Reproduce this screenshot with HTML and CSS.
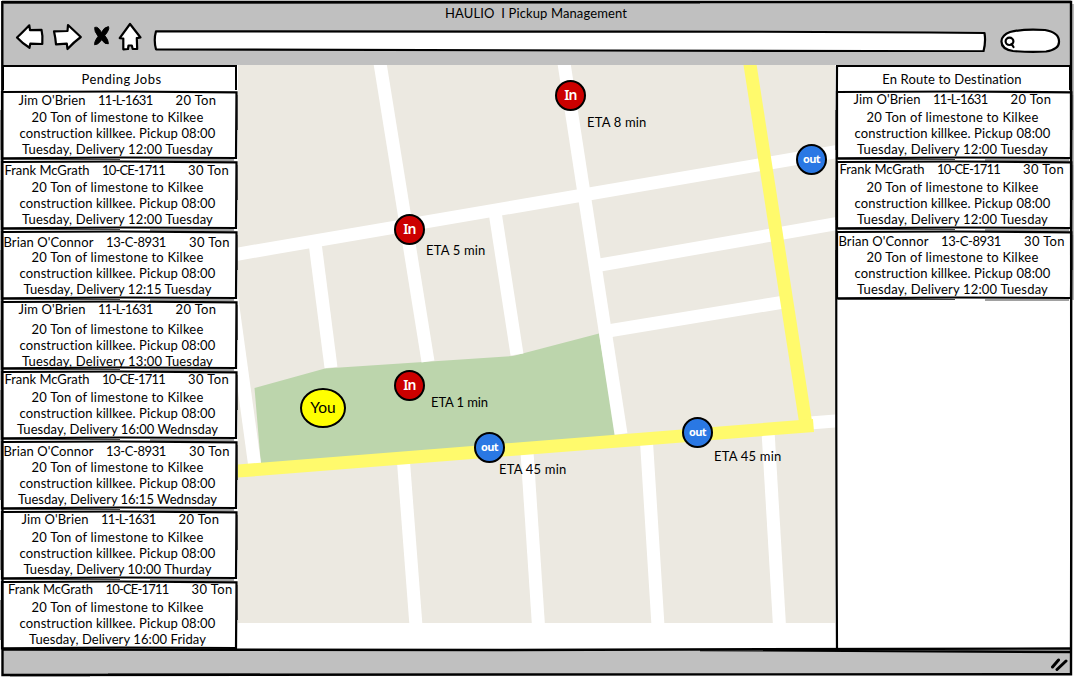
FILE: index.html
```html
<!DOCTYPE html>
<html lang="en">
<head>
<meta charset="utf-8">
<title>HAULIO | Pickup Management</title>
<link rel="stylesheet" href="styles.css">
</head>
<body>
<div class="window">
  <header class="chrome">
    <div class="title"><span data-w="182">HAULIO&nbsp; I Pickup Management</span></div>
    <div class="toolbar">
      <svg class="tool back" width="30" height="30" viewBox="15 22 30 30"><path d="M17 37.5 Q22 33 29.3 25.3 L30 30.2 L41.5 29.8 Q43 36 42.3 44 L30.3 43.6 L29.5 47.8 Q22 43 17 37.5Z"/></svg>
      <svg class="tool forward" width="32" height="30" viewBox="51 22 32 30"><path d="M54 31.3 L67.5 31 L68 25 L80.8 37 Q74 42 67.5 49 L66.8 43.6 L56 44.4 Q55.5 38 54 31.3Z"/></svg>
      <svg class="tool stop" width="20" height="30" viewBox="92 22 20 30"><path class="ink" d="M94.7 27.4 Q98 26 101.500 32.500 Q104 27 108.500 26.600 Q110 29.500 104.800 35.500 Q108.600 40 108.400 43.800 Q105 44.800 101.700 39.800 Q98 45.200 94.600 44.800 Q94 42 98.100 36.300 Q94 31 94.700 27.400Z"/></svg>
      <svg class="tool home" width="26" height="30" viewBox="117 22 26 30"><path d="M130 24 L140.500 37.500 L136.800 38.200 L137.200 49 L132.700 49 L131.800 45.500 L128.500 45.500 L128 49 L123.300 49.300 L123.300 38.500 L119.700 38.200Z"/></svg>
      <svg class="tool url" width="836" height="30" viewBox="152 22 836 30"><path d="M156 31.300 Q400 31.800 600 31.600 T984.500 33 Q986 42 983.500 51.300 Q800 50.500 600 50.500 T156 49.300 Q153.500 40 156 31.300Z"/></svg>
      <svg class="tool search" width="62" height="30" viewBox="999 25 62 30"><path d="M1010 32 Q1024 28.500 1045 30 Q1059.500 32.500 1059 42 Q1059 49.500 1046 51.500 Q1030 52.500 1013 51 Q1001 49 1001.500 41 Q1002 35 1010 32Z"/><ellipse class="lens" cx="1009.500" cy="41.300" rx="3.900" ry="3.700"/><path class="lens" d="M1011.500 44 L1013.500 47"/></svg>
    </div>
  </header>

  <main class="main">
    <section class="column">
      <h2 class="column-head"><span data-w="80">Pending Jobs</span></h2>
      <div class="jobs" id="pending"></div>
    </section>

    <section class="map">
      <svg class="streets" width="597" height="558" viewBox="238 65 597 558">
        <path class="park" d="M254.500 388 L325 368.500 L513 356 L599 333.500 L616 437 L261 465Z"/>
        <g class="road">
          <path d="M379.500 60 L428 361.500"/>
          <path d="M563.500 60 L621 434"/>
          <path d="M230 255.400 L840 151"/>
          <path d="M315 243 L331 367.500"/>
          <path d="M495 212 L517 354.500"/>
          <path d="M600 265 L840 223"/>
          <path d="M608 331 L782 302.300"/>
          <path d="M230 285 L254.800 466"/>
          <path d="M403.500 462 L416 626"/>
          <path d="M527 452 L538.500 626"/>
          <path d="M646.500 442 L658 626"/>
          <path d="M768 431 L779.500 626"/>
          <path d="M810 423 L840 420.700"/>
        </g>
        <g class="highway">
          <path d="M749.300 60 L806.500 428"/>
          <path d="M230 471.700 L813.500 425.500"/>
        </g>
      </svg>
      <span class="pin in" style="left:333px;top:31px">In</span>
      <span class="pin in" style="left:172px;top:165px">In</span>
      <span class="pin in" style="left:172px;top:321px">In</span>
      <span class="pin out" style="left:574px;top:95px">out</span>
      <span class="pin out" style="left:252px;top:383px">out</span>
      <span class="pin out" style="left:460px;top:368px">out</span>
      <span class="pin you" style="left:85px;top:343px">You</span>
      <span class="eta" style="left:349px;top:49px" data-w="59.5">ETA 8 min</span>
      <span class="eta" style="left:188px;top:177px" data-w="59.5">ETA 5 min</span>
      <span class="eta" style="left:193px;top:329px" data-w="57">ETA 1 min</span>
      <span class="eta" style="left:261px;top:396px" data-w="67.5">ETA 45 min</span>
      <span class="eta" style="left:476px;top:383px" data-w="67.5">ETA 45 min</span>
    </section>

    <section class="column enroute">
      <h2 class="column-head"><span data-w="140">En Route to Destination</span></h2>
      <div class="jobs" id="enroute"></div>
    </section>
  </main>

  <footer class="status">
    <svg class="grip" width="20" height="16" viewBox="1050 655 20 16"><path d="M1052.500 667 L1058.500 660 M1057 669.500 L1066 661"/></svg>
  </footer>

  <svg class="outline" width="1074" height="677" viewBox="0 0 1074 677">
    <path class="soft" d="M2 1 H1071 M4 3.500 H700 M1073 4 V300 M1 120 V500 M10 676 H90 M108 673.500 H260"/>
    <path d="M2.300 2.300 L1071 2 Q1070.300 300 1071.300 500 L1071 674.300 L500 674.500 L2.500 675 Q2.800 400 2.300 200Z"/>
    <path d="M3 649.500 L500 650 L1070 648.500 M700 650 L1070 652"/>
    <path class="edge" d="M837 66 Q835.500 350 837 649"/>
  </svg>
</div>
<script src="app.js"></script>
</body>
</html>
```
FILE: styles.css
```css
* { box-sizing: border-box; }
body {
  margin: 0;
  background: #fff;
  color: #000;
  font: 13px/16px Lato, "Open Sans", sans-serif;
}
.window {
  position: relative;
  display: flex;
  flex-direction: column;
  width: 1074px;
  height: 677px;
  padding: 2px;
  overflow: hidden;
}
.chrome {
  height: 63px;
  flex: none;
  background: #c0c0c0;
}
.title {
  height: 20px;
  padding: 3px 0 0 443px;
  white-space: pre;
}
.toolbar {
  display: flex;
  align-items: flex-start;
  padding-left: 13px;
}
.tool { flex: none; fill: #fff; stroke: #000; stroke-width: 2.2; stroke-linejoin: round; }
.tool .ink { fill: #000; stroke-width: 0.9; }
.tool .lens { fill: none; stroke-width: 2.2; stroke-linecap: round; }
.forward { margin-left: 6px; }
.stop { margin-left: 9px; }
.home { margin-left: 5px; }
.url { margin-left: 9px; }
.search { margin-left: 11px; margin-top: 3px; }

.main {
  display: grid;
  grid-template-columns: 238px 597px 237px;
  flex: none;
  height: 584px;
  margin-left: -2px;
}
.column { background: #fff; }
.column-head {
  width: 235px;
  height: 25px;
  margin: 0 0 0 2px;
  padding: 4px 0 0 3px;
  border: 2px solid #000;
  border-bottom: 0;
  font: inherit;
  text-align: center;
}
.column-head span { margin-right: -1px; }
.enroute .column-head { margin-left: 1px; padding: 4px 4px 0 0; }
.job {
  position: relative;
  height: 70px;
  padding-top: var(--drop);
  white-space: nowrap;
}
.job-head {
  display: flex;
  height: calc(19px - var(--drop));
  padding-left: var(--start);
}
.job.low .job-head { height: 20px; }
.plate { margin-left: 12.5px; }
.load { margin-left: 23px; }
.job-text { width: 235px; text-align: center; }
.frame {
  position: absolute;
  left: 0;
  top: 0;
  fill: none;
  stroke: #000;
  stroke-width: 2.2;
  overflow: visible;
}
.frame .soft { stroke: #444; stroke-width: 1.2; }

.map { position: relative; background: #fff; }
.streets { display: block; background: #ece9e1; }
.park { fill: #bcd5ac; }
.road { stroke: #fff; stroke-width: 13; }
.highway { stroke: #fffa6c; stroke-width: 13; fill: none; }
.pin {
  position: absolute;
  display: flex;
  align-items: center;
  justify-content: center;
  width: 31px;
  height: 31px;
  margin: -16px 0 0 -16px;
  border: 2px solid #000;
  border-radius: 50%;
  color: #fff;
}
.in {
  background: #c00;
  font: 600 14px/16px "Noto Sans", sans-serif;
  letter-spacing: -0.8px;
  padding-bottom: 1px;
}
.out {
  background: #2a78e4;
  font: 700 11px/16px "Open Sans", sans-serif;
  letter-spacing: -0.6px;
  padding-bottom: 1px;
}
.you {
  width: 46px;
  height: 40px;
  margin: -20px 0 0 -23px;
  padding-bottom: 2px;
  background: #ff0;
  color: #000;
  font: 15.5px/18px Lato, sans-serif;
}
.eta { position: absolute; white-space: pre; }

.status {
  display: flex;
  justify-content: flex-end;
  flex: none;
  height: 26px;
  padding: 6px 2px 0 0;
  background: #c0c0c0;
}
.grip { fill: none; stroke: #000; stroke-width: 3; stroke-linecap: round; }
.outline {
  position: absolute;
  left: 0;
  top: 0;
  fill: none;
  stroke: #000;
  stroke-width: 2.4;
  pointer-events: none;
}
.outline .soft { stroke: #777; stroke-width: 1; }
.outline .edge { stroke-width: 2.2; }
```
FILE: app.js
```js
const people = {
  jim: [["Jim O'Brien", 67], ["11-L-1631", 54.5], ["20 Ton", 41]],
  frank: [["Frank McGrath", 85], ["10-CE-1711", 63], ["30 Ton", 41]],
  brian: [["Brian O'Connor", 90], ["13-C-8931", 60], ["30 Ton", 41]]
};

// driver, left start, top drop, delivery line, line width, extra class
const pending = [
  ["jim", 18.5, 2, "12:00 Tuesday", 191],
  ["frank", 4.5, 2, "12:00 Tuesday", 191],
  ["brian", 3.5, 4, "12:15 Tuesday", 188],
  ["jim", 18.5, 1, "13:00 Tuesday", 191, "low"],
  ["frank", 4.5, 1, "16:00 Wednsday", 201],
  ["brian", 3.5, 3, "16:15 Wednsday", 199],
  ["jim", 21.5, 1, "10:00 Thurday", 188],
  ["frank", 8, 1, "16:00 Friday", 177]
];
const enroute = [
  ["jim", 18.5, 1, "12:00 Tuesday", 191],
  ["frank", 4.5, 1, "12:00 Tuesday", 191],
  ["brian", 3.5, 3, "12:00 Tuesday", 191]
];

const part = (cls, [text, w]) => `<span class="${cls}" data-w="${w}">${text}</span>`;

function card([who, start, drop, delivery, w, extra = ""]) {
  const [name, plate, load] = people[who];
  return `<article class="job ${extra}" style="--start:${start}px;--drop:${drop}px">
<svg class="frame" width="238" height="70" viewBox="0 0 238 70"><path d="M2 2 L120 1.500 L236.500 2.300 L236 68 L120 67.500 L2 68.300Z"/><path class="soft" d="M3 69.500 H120 M150 70 H234 M237.500 5 V40 M1 20 V60"/></svg>
<div class="job-head">${part("name", name)}${part("plate", plate)}${part("load", load)}</div>
<div class="job-text"><span data-w="172">20 Ton of limestone to Kilkee</span></div>
<div class="job-text"><span data-w="196">construction killkee. Pickup 08:00</span></div>
<div class="job-text"><span data-w="${w}">Tuesday, Delivery ${delivery}</span></div>
</article>`;
}

document.getElementById("pending").innerHTML = pending.map(card).join("");
document.getElementById("enroute").innerHTML = enroute.map(card).join("");

// Track every label so that it fills its intended width.
document.querySelectorAll("[data-w]").forEach(el => {
  const gap = (el.dataset.w - el.getBoundingClientRect().width) / el.textContent.length;
  el.style.letterSpacing = gap.toFixed(3) + "px";
});
```
